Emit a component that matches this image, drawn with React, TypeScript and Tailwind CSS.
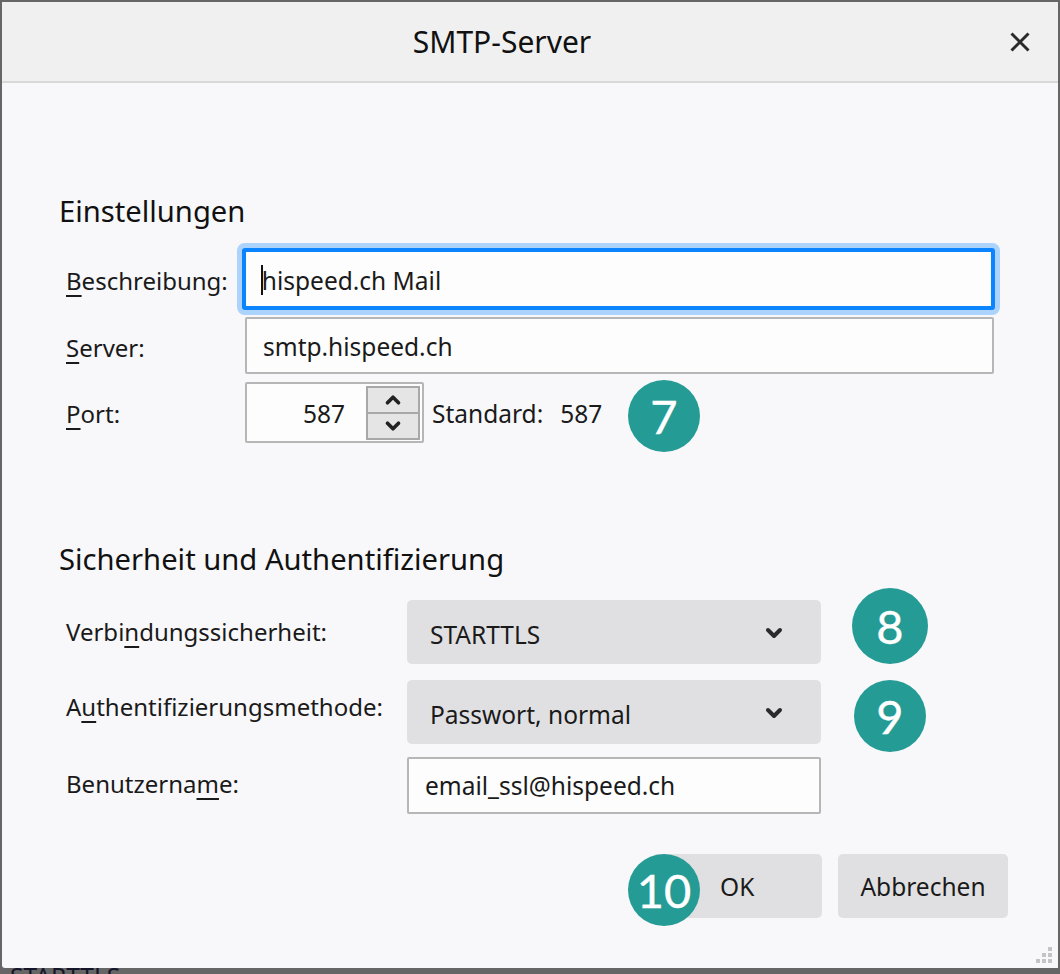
import React from 'react';
import { ChevronDown, ChevronUp } from 'lucide-react';

const Label = ({ pre, mark, post, className = '' }: { pre?: string; mark: string; post?: string; className?: string }) => (
  <div className={`text-[24px] text-[#1a1a1a] whitespace-nowrap ${className}`}>
    {pre}
    <span className="underline decoration-2 underline-offset-[5px]">{mark}</span>
    {post}
  </div>
);

const Badge = ({ n, className }: { n: number; className: string }) => (
  <div className={`absolute rounded-full bg-[#259b96] text-white flex items-center justify-center font-['Lato',sans-serif] text-[47px] [-webkit-text-stroke:0.4px_white] ${className}`}>
    {n}
  </div>
);

const SelectBox = ({ value }: { value: string }) => (
  <div className="w-[414px] h-[64px] rounded-[5px] bg-[#e0e0e2] flex items-center justify-between pl-[23px] pr-[35px]">
    <span className="pt-[6px]">{value}</span>
    <ChevronDown size={24} strokeWidth={4} className="text-[#2a2a2a] mt-[1px]" />
  </div>
);

export default function App() {
  return (
    <div className="w-[1060px] h-[974px] bg-[#666666] overflow-hidden font-['Noto_Sans',sans-serif] text-[24.5px] text-[#1a1a1a]">
      <div className="relative ml-[2px] mt-[2px] w-[1056px] h-[966px] bg-[#f8f8fa] rounded-tr-[4px] rounded-bl-[3px]">
        {/* title bar */}
        <div className="relative h-[81px] bg-[#f0f0f0] border-b-2 border-[#d8d8d8] flex items-center justify-center pr-[56px]">
          <span className="text-[30px] text-[#111]">SMTP-Server</span>
          <svg className="absolute left-[1008px] top-[30px]" width="20" height="20" viewBox="0 0 20 20">
            <path d="M1.5 1.5 L18.5 18.5 M18.5 1.5 L1.5 18.5" stroke="#2a2a2a" strokeWidth="3" />
          </svg>
        </div>

        <div className="pl-[57px] pr-[63px]">
          <div className="mt-[108px] text-[29.2px] leading-[40px] text-[#111]">Einstellungen</div>

          <div className="mt-[17px] flex items-center">
            <Label mark="B" post="eschreibung:" className="ml-[7px] w-[176px] pt-[4px]" />
            <div className="w-[754px] h-[62px] rounded-[3px] bg-[#fdfdfd] border-4 border-[#0a84ff] shadow-[0_0_0_5px_#acd3fb] flex items-center pl-[15px] pt-[4px]">
              <span className="w-[2px] h-[30px] bg-[#111] -mr-[1px] -mt-[2px]" />
              hispeed.ch Mail
            </div>
          </div>

          <div className="mt-[7px] flex items-center">
            <Label mark="S" post="erver:" className="ml-[7px] w-[179px] pt-[4px]" />
            <div className="w-[749px] h-[57px] rounded-[2px] bg-[#fdfdfd] border-2 border-[#b6b6b6] flex items-center pl-[16px] pt-[4px]">
              smtp.hispeed.ch
            </div>
          </div>

          <div className="mt-[8px] flex items-center">
            <Label mark="P" post="ort:" className="ml-[7px] w-[179px] pt-[2px]" />
            <div className="w-[179px] h-[61px] rounded-[2px] bg-[#fdfdfd] border-2 border-[#b6b6b6] flex items-center justify-between pr-[2px]">
              <span className="w-[98px] text-right pt-[4px]">587</span>
              <div className="w-[54px] h-[54px] border-2 border-[#a8a8a8] bg-[#e5e5e5] flex flex-col">
                <div className="flex-1 flex items-center justify-center border-b-2 border-[#a8a8a8]">
                  <ChevronUp size={22} strokeWidth={4} className="text-[#222]" />
                </div>
                <div className="flex-1 flex items-center justify-center">
                  <ChevronDown size={22} strokeWidth={4} className="text-[#222]" />
                </div>
              </div>
            </div>
            <span className="ml-[8px] pt-[4px]">Standard:</span>
            <span className="ml-[17px] pt-[4px]">587</span>
          </div>

          <div className="mt-[96px] text-[29.2px] leading-[40px] text-[#111]">Sicherheit und Authentifizierung</div>

          <div className="mt-[21px] flex items-center">
            <Label pre="Verbi" mark="n" post="dungssicherheit:" className="ml-[7px] w-[341px]" />
            <SelectBox value="STARTTLS" />
          </div>
          <div className="mt-[16px] flex items-center">
            <Label pre="A" mark="u" post="thentifizierungsmethode:" className="ml-[7px] w-[341px] mb-[10px]" />
            <SelectBox value="Passwort, normal" />
          </div>
          <div className="mt-[13px] flex items-center">
            <Label pre="Benutzerna" mark="m" post="e:" className="ml-[7px] w-[341px] mb-[4px]" />
            <div className="w-[414px] h-[57px] rounded-[2px] bg-[#fdfdfd] border-2 border-[#b6b6b6] flex items-center pl-[16px] pt-[2px]">
              email_ssl@hispeed.ch
            </div>
          </div>

          <div className="mt-[40px] -mr-[13px] flex justify-end gap-[16px]">
            <div className="w-[170px] h-[64px] rounded-[5px] bg-[#e0e0e2] flex items-center pl-[68px] pt-[2px]">OK</div>
            <div className="w-[170px] h-[64px] rounded-[5px] bg-[#e0e0e2] flex items-center justify-center pt-[2px]">Abbrechen</div>
          </div>
        </div>

        <Badge n={7} className="left-[626px] top-[378px] w-[72px] h-[72px]" />
        <Badge n={8} className="left-[850px] top-[586px] w-[76px] h-[76px]" />
        <Badge n={9} className="left-[852px] top-[678px] w-[72px] h-[72px]" />
        <Badge n={10} className="left-[626px] top-[852px] w-[72px] h-[72px]" />

        <svg className="absolute left-[1034px] top-[945px]" width="16" height="16" viewBox="0 0 16 16" fill="#c4c4c6">
          <rect x="12" y="0" width="4" height="4" />
          <rect x="6" y="6" width="4" height="4" />
          <rect x="12" y="6" width="4" height="4" />
          <rect x="0" y="12" width="4" height="4" />
          <rect x="6" y="12" width="4" height="4" />
          <rect x="12" y="12" width="4" height="4" />
        </svg>
      </div>
      {/* page behind the dialog, cut off by the window edge */}
      <div className="pl-[10px] -mt-[3px] leading-[24px] text-[#16162a]">STARTTLS</div>
    </div>
  );
}
